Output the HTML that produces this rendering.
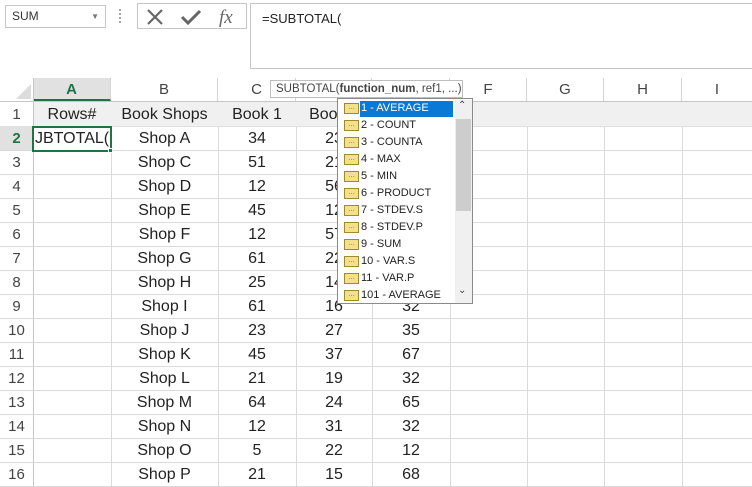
<!DOCTYPE html>
<html><head><style>
*{margin:0;padding:0;box-sizing:border-box}
body{width:752px;height:487px;overflow:hidden;background:#fff;font-family:"Liberation Sans",sans-serif;position:relative}
.a{position:absolute}
.cell{position:absolute;text-align:center;font-size:16px;color:#222;line-height:24px;height:24px}
.vl{position:absolute;width:1px;background:#dadada}
.hl{position:absolute;height:1px;background:#dadada}
.ch{position:absolute;top:78px;height:23px;line-height:23px;text-align:center;font-size:15px;color:#444;border-right:1px solid #d4d4d4}
.rh{position:absolute;left:0;width:33px;height:24px;line-height:24px;text-align:center;font-size:15px;color:#444}
.it{position:absolute;left:2px;height:17px;line-height:17px;font-size:11px;color:#222;padding-left:21px;width:115px;white-space:nowrap}
.ic{position:absolute;left:4px;top:3px;width:15px;height:11px;background:#f5e08a;border:1px solid #a08a30;font-size:7px;line-height:8px;text-align:center;color:#6a5a20}
</style></head><body>
<div class="a" style="left:5px;top:5px;width:101px;height:23px;border:1px solid #c6c6c6;font-size:12px;line-height:21px;padding-left:6px;color:#333">SUM<span class="a" style="right:6px;top:0;font-size:8px;color:#777">▼</span></div>
<div class="a" style="left:119px;top:9px;width:2px;height:14px;border-left:2px dotted #aaa"></div>
<div class="a" style="left:137px;top:3px;width:110px;height:26px;border:1px solid #c6c6c6"></div>
<svg class="a" style="left:145px;top:7px" width="100" height="20"><path d="M3 3 L17 17 M17 3 L3 17" stroke="#666" stroke-width="2.2"/><path d="M37 10 L43 16 L55 4" stroke="#666" stroke-width="3" fill="none"/><text x="74" y="16" font-family="Liberation Serif" font-style="italic" font-size="19" fill="#666">fx</text></svg>
<div class="a" style="left:250px;top:3px;width:510px;height:66px;border:1px solid #c6c6c6;font-size:13px;padding:7px 0 0 11px;color:#222">=SUBTOTAL(</div>
<div class="a" style="left:0;top:78px;width:752px;height:24px;background:#fff;border-bottom:1px solid #c6c6c6"></div>
<svg class="a" style="left:14px;top:84px" width="18" height="16"><path d="M17 0 L17 15 L2 15 Z" fill="#dcdcdc"/></svg>
<div class="ch" style="left:33px;width:78px;background:#e1e1e1;color:#217346;font-weight:bold;border-bottom:2px solid #217346">A</div>
<div class="ch" style="left:111px;width:107px">B</div>
<div class="ch" style="left:218px;width:78px">C</div>
<div class="ch" style="left:296px;width:76px">D</div>
<div class="ch" style="left:372px;width:78px">E</div>
<div class="ch" style="left:450px;width:77px">F</div>
<div class="ch" style="left:527px;width:77px">G</div>
<div class="ch" style="left:604px;width:78px">H</div>
<div class="ch" style="left:682px;width:70px;border:none">I</div>
<div class="a" style="left:33px;top:102px;width:719px;height:25px;background:#f0f0f0"></div>
<div class="a" style="left:0;top:127px;width:33px;height:24px;background:#e1e1e1"></div>
<div class="vl" style="left:33px;top:78px;height:409px;background:#c6c6c6"></div>
<div class="vl" style="left:111px;top:127px;height:360px"></div>
<div class="vl" style="left:218px;top:127px;height:360px"></div>
<div class="vl" style="left:296px;top:127px;height:360px"></div>
<div class="vl" style="left:372px;top:127px;height:360px"></div>
<div class="vl" style="left:450px;top:127px;height:360px"></div>
<div class="vl" style="left:527px;top:127px;height:360px"></div>
<div class="vl" style="left:604px;top:127px;height:360px"></div>
<div class="vl" style="left:682px;top:127px;height:360px"></div>
<div id="g"></div>
<script>
var d=[["Rows#","Book Shops","Book 1","Book 2","Book 3"],["JBTOTAL(","Shop A","34","23",""],["","Shop C","51","21",""],["","Shop D","12","56",""],["","Shop E","45","12",""],["","Shop F","12","57",""],["","Shop G","61","22",""],["","Shop H","25","14",""],["","Shop I","61","16","32"],["","Shop J","23","27","35"],["","Shop K","45","37","67"],["","Shop L","21","19","32"],["","Shop M","64","24","65"],["","Shop N","12","31","32"],["","Shop O","5","22","12"],["","Shop P","21","15","68"]];
var L=[33,111,218,296,372],W=[78,107,78,76,78],h="";
for(var r=0;r<16;r++){var t=103+24*r;
h+='<div class="hl" style="left:0;top:'+(t+23)+'px;width:752px;'+(r==0?'background:#e0e0e0':'')+'"></div>';
h+='<div class="rh" style="top:'+t+'px;'+(r==1?'color:#217346;font-weight:bold':'')+'">'+(r+1)+'</div>';
for(var c=0;c<5;c++){if(d[r][c])h+='<div class="cell" style="left:'+L[c]+'px;top:'+t+'px;width:'+W[c]+'px;'+(r==1&&c==0?'text-align:left;padding-left:2px;overflow:hidden;white-space:nowrap':'')+'">'+d[r][c]+'</div>';}}
document.getElementById('g').innerHTML=h;
</script>
<div class="a" style="left:32px;top:126px;width:80px;height:26px;border:2px solid #217346"></div>
<div class="a" style="left:108px;top:148px;width:5px;height:5px;background:#217346;border:1px solid #fff"></div>
<div class="a" style="left:270px;top:80px;width:193px;height:18px;background:#fff;border:1px solid #bdbdbd;font-size:11.5px;line-height:16px;padding-left:5px;color:#444;white-space:nowrap">SUBTOTAL(<b>function_num</b>, ref1, ...)</div>
<div class="a" style="left:337px;top:98px;width:136px;height:206px;background:#fff;border:1px solid #8a8a8a">
<div class="a" style="left:22px;top:2px;width:93px;height:16px;background:#0a78d7"></div>
<div id="dd"></div>
<div class="a" style="left:117px;top:1px;width:17px;height:203px;background:#f0f0f0"></div>
<div class="a" style="left:118px;top:20px;width:15px;height:92px;background:#cdcdcd"></div>
<div class="a" style="left:120px;top:1px;font-size:10px;color:#444">&#8963;</div>
<div class="a" style="left:120px;top:186px;font-size:10px;color:#444">&#8964;</div>
</div>
<script>
var it=["1 - AVERAGE","2 - COUNT","3 - COUNTA","4 - MAX","5 - MIN","6 - PRODUCT","7 - STDEV.S","8 - STDEV.P","9 - SUM","10 - VAR.S","11 - VAR.P","101 - AVERAGE"],s="";
for(var i=0;i<12;i++)s+='<div class="it" style="top:'+(1+17*i)+'px;'+(i==0?'color:#fff':'')+'"><span class="ic">…</span>'+it[i]+'</div>';
document.getElementById('dd').innerHTML=s;
</script>
</body></html>
